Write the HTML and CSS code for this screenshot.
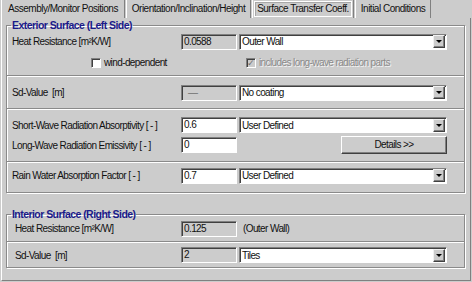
FILE: index.html
```html
<!DOCTYPE html>
<html lang="en">
<head>
    <meta charset="UTF-8">
    <title>Surface Transfer Coeff.</title>
    <link rel="stylesheet" href="styles.css">
</head>
<body>

    <div class="tabs">
        <div class="tab t1">Assembly/Monitor Positions</div>
        <div class="tab t2">Orientation/Inclination/Height</div>
        <div class="tab t3 active"><span>Surface Transfer Coeff.</span></div>
        <div class="tab t4">Initial Conditions</div>
    </div>

    <div class="panel">
        <fieldset class="group ext">
            <legend>Exterior Surface (Left Side)</legend>

            <div class="sect s1">
                <div class="row">
                    <span class="label">Heat Resistance [m²K/W]</span>
                    <span class="field ro">0.0588</span>
                    <div class="combo"><span>Outer Wall</span><i class="drop"></i></div>
                </div>
                <div class="checks">
                    <span class="chk"><i class="box"></i>wind-dependent</span>
                    <span class="chk off"><i class="box">&#10003;</i>includes long-wave radiation parts</span>
                </div>
            </div>

            <div class="sect s2">
                <div class="row">
                    <span class="label">Sd-Value&nbsp; [m]</span>
                    <span class="field ro dash">&mdash;</span>
                    <div class="combo"><span>No coating</span><i class="drop"></i></div>
                </div>
            </div>

            <div class="sect s3">
                <div class="row">
                    <span class="label">Short-Wave Radiation Absorptivity [ - ]</span>
                    <span class="field">0.6</span>
                    <div class="combo"><span>User Defined</span><i class="drop"></i></div>
                </div>
                <div class="row">
                    <span class="label">Long-Wave Radiation Emissivity [ - ]</span>
                    <span class="field">0</span>
                    <div class="btn-slot"><span class="btn">Details &gt;&gt;</span></div>
                </div>
            </div>

            <div class="sect s4">
                <div class="row">
                    <span class="label">Rain Water Absorption Factor [ - ]</span>
                    <span class="field">0.7</span>
                    <div class="combo"><span>User Defined</span><i class="drop"></i></div>
                </div>
            </div>
        </fieldset>

        <fieldset class="group int">
            <legend>Interior Surface (Right Side)</legend>

            <div class="sect i1">
                <div class="row">
                    <span class="label">Heat Resistance [m²K/W]</span>
                    <span class="field ro">0.125</span>
                    <span class="note">(Outer Wall)</span>
                </div>
            </div>

            <div class="sect i2">
                <div class="row">
                    <span class="label">Sd-Value&nbsp; [m]</span>
                    <span class="field ro">2</span>
                    <div class="combo"><span>Tiles</span><i class="drop"></i></div>
                </div>
            </div>
        </fieldset>
    </div>

</body>
</html>
```

FILE: styles.css
```css
body {
    margin: 0;
    width: 472px;
    height: 282px;
    overflow: hidden;
    background: #cccccc;
    color: #111;
    font-family: "Liberation Sans", Arial, sans-serif;
    font-size: 10px;
    letter-spacing: -0.6px;
}
.tabs {
    display: flex;
    height: 18px;
}
.tab {
    box-sizing: border-box;
    height: 18px;
    margin-left: 1px;
    line-height: 17px;
    text-align: center;
    white-space: nowrap;
    letter-spacing: -0.5px;
    border-left: 1px solid #fff;
    border-right: 1px solid #808080;
}
.t1 { width: 124px; }
.t2 { width: 125px; }
.t3 { width: 102px; padding: 1px; }
.t4 { width: 76px; }
.active span {
    display: block;
    height: 14px;
    line-height: 13px;
    border: 1px solid #fff;
    box-shadow: inset 1px 1px 0 #a8a8a8;
}
.panel {
    box-sizing: border-box;
    height: 263px;
    margin-left: 1px;
    width: 470px;
    border-left: 1px solid #fff;
    border-right: 1px solid #808080;
    border-bottom: 1px solid #808080;
    padding-top: 2px;
}
.group {
    margin: 0 5px 0 4px;
    padding: 0;
    min-width: 0;
    border: 1px solid #8a8a8a;
    box-shadow: 1px 1px 0 #fff, inset 1px 1px 0 #fff;
}
.group legend {
    padding: 0 1px;
    margin-left: 4px;
    line-height: 10px;
    font-weight: bold;
    font-size: 10.5px;
    letter-spacing: -0.55px;
    color: #1a1a8a;
}
.int {
    margin-top: 16px;
}
.sect + .sect {
    border-top: 1px solid #fff;
}
.sect {
    border-bottom: 1px solid #8a8a8a;
}
.sect:last-child {
    border-bottom: none;
}
.row {
    display: flex;
    align-items: center;
    height: 20px;
}
.label {
    box-sizing: border-box;
    width: 174px;
    padding-left: 5px;
    white-space: nowrap;
}
.int .label {
    padding-left: 8px;
}
.field {
    box-sizing: border-box;
    width: 56px;
    height: 16px;
    line-height: 14px;
    padding-left: 2px;
    background: #fff;
    border: 1px solid;
    border-color: #808080 #fff #fff #808080;
    box-shadow: inset 1px 1px 0 #404040;
}
.field.ro {
    background: #cccccc;
}
.field.dash {
    padding-left: 6px;
    color: #707070;
}
.combo {
    box-sizing: border-box;
    display: flex;
    align-items: center;
    justify-content: space-between;
    width: 208px;
    height: 16px;
    margin-left: 2px;
    padding-left: 2px;
    background: #fff;
    border: 1px solid;
    border-color: #808080 #fff #fff #808080;
    box-shadow: inset 1px 1px 0 #404040;
}
.drop {
    position: relative;
    box-sizing: border-box;
    width: 12px;
    height: 13px;
    margin-right: 1px;
    background: #cccccc;
    border: 1px solid;
    border-color: #f0f0f0 #404040 #404040 #f0f0f0;
    box-shadow: inset -1px -1px 0 #808080;
}
.drop::after {
    content: "";
    position: absolute;
    left: 2px;
    top: 4px;
    border-left: 3px solid transparent;
    border-right: 3px solid transparent;
    border-top: 3px solid #000;
}
.note {
    margin-left: 6px;
}
.s1 {
    height: 44px;
}
.s1 .row {
    height: 21px;
    margin-top: 1px;
}
.checks {
    display: flex;
    align-items: center;
    height: 21px;
    padding-left: 84px;
}
.chk {
    display: flex;
    align-items: center;
    white-space: nowrap;
}
.chk:first-child {
    width: 155px;
}
.box {
    box-sizing: border-box;
    width: 10px;
    height: 10px;
    margin-right: 3px;
    background: #fff;
    border: 1px solid;
    border-color: #808080 #fff #fff #808080;
    box-shadow: inset 1px 1px 0 #404040;
    font-style: normal;
    font-size: 9px;
    line-height: 8px;
    text-align: center;
    letter-spacing: 0;
}
.off {
    color: #8a8a8a;
    text-shadow: 1px 1px 0 #f4f4f4;
}
.off .box {
    background: #cccccc;
    color: #707070;
    text-shadow: none;
}
.s2 {
    height: 31px;
}
.s2 .row {
    height: 31px;
}
.s3 {
    height: 53px;
    padding-top: 5px;
    box-sizing: border-box;
}
.btn-slot {
    display: flex;
    justify-content: flex-end;
    width: 208px;
    margin-left: 2px;
}
.btn {
    box-sizing: border-box;
    width: 106px;
    height: 18px;
    line-height: 15px;
    text-align: center;
    border: 1px solid;
    border-color: #fff #404040 #404040 #fff;
    box-shadow: inset -1px -1px 0 #808080;
}
.s4 {
    height: 29px;
}
.s4 .row {
    height: 25px;
}
.i1 {
    height: 22px;
}
.i1 .row {
    height: 19px;
}
.i2 {
    height: 24px;
}
.i2 .row {
    height: 22px;
    margin-top: 1px;
}
```
